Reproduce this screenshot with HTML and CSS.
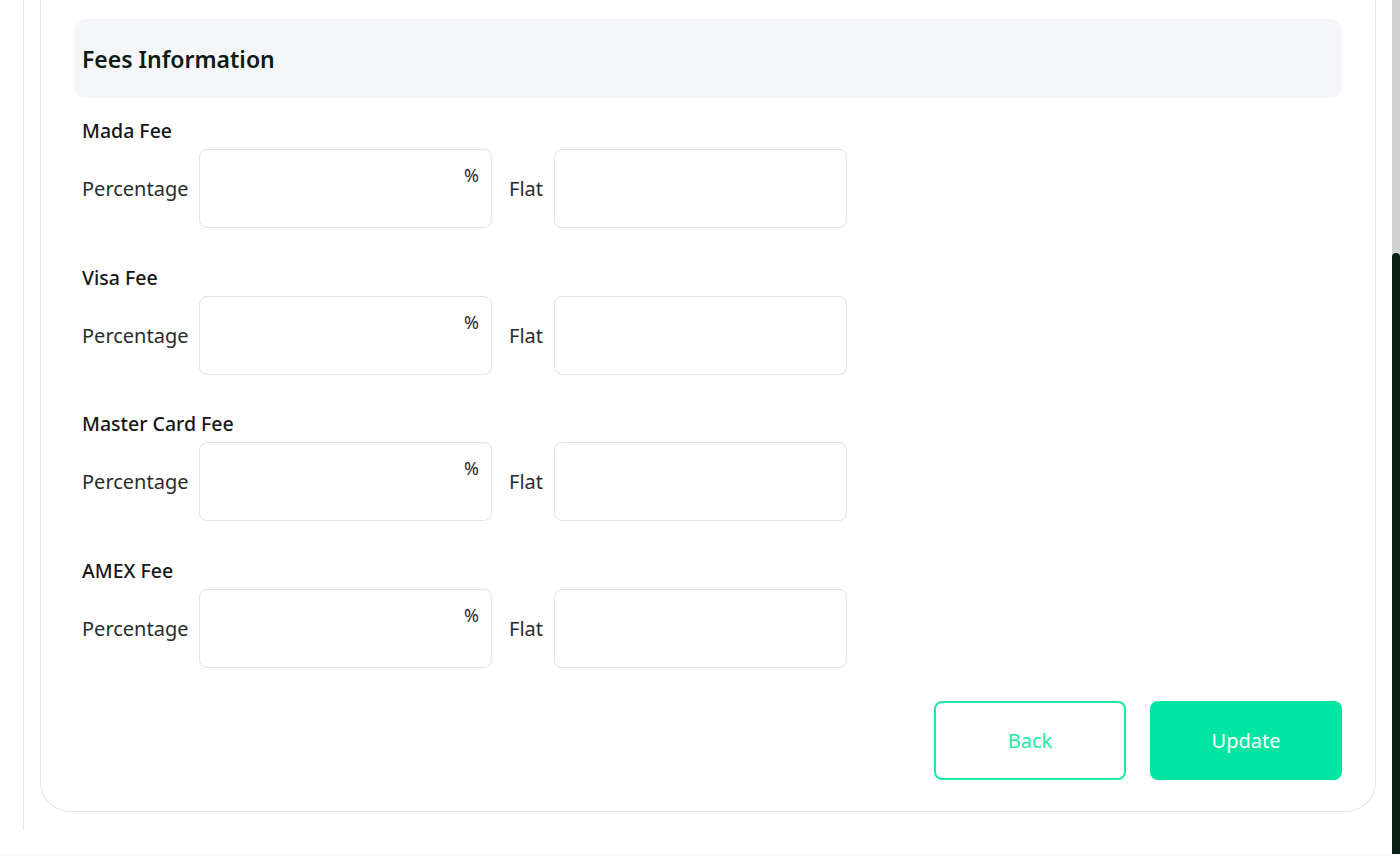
FILE: index.html
```html
<!DOCTYPE html>
<html lang="en">
<head>
<meta charset="utf-8">
<title>Fees Information</title>
<link rel="stylesheet" href="styles.css">
</head>
<body>
<div class="page">
  <div class="rail"></div>
  <main class="main">
    <section class="card">
      <div class="card-head">
        <h2 class="title">Fees Information</h2>
      </div>

      <div class="fee">
        <div class="fee-name">Mada Fee</div>
        <div class="fee-row">
          <label class="lbl lbl-pct">Percentage</label>
          <div class="field"><input class="inp" type="text"><span class="unit">%</span></div>
          <label class="lbl lbl-flat">Flat</label>
          <div class="field"><input class="inp" type="text"></div>
        </div>
      </div>

      <div class="fee">
        <div class="fee-name">Visa Fee</div>
        <div class="fee-row">
          <label class="lbl lbl-pct">Percentage</label>
          <div class="field"><input class="inp" type="text"><span class="unit">%</span></div>
          <label class="lbl lbl-flat">Flat</label>
          <div class="field"><input class="inp" type="text"></div>
        </div>
      </div>

      <div class="fee">
        <div class="fee-name">Master Card Fee</div>
        <div class="fee-row">
          <label class="lbl lbl-pct">Percentage</label>
          <div class="field"><input class="inp" type="text"><span class="unit">%</span></div>
          <label class="lbl lbl-flat">Flat</label>
          <div class="field"><input class="inp" type="text"></div>
        </div>
      </div>

      <div class="fee">
        <div class="fee-name">AMEX Fee</div>
        <div class="fee-row">
          <label class="lbl lbl-pct">Percentage</label>
          <div class="field"><input class="inp" type="text"><span class="unit">%</span></div>
          <label class="lbl lbl-flat">Flat</label>
          <div class="field"><input class="inp" type="text"></div>
        </div>
      </div>

      <div class="actions">
        <button class="btn btn-back" type="button">Back</button>
        <button class="btn btn-update" type="button">Update</button>
      </div>
    </section>
  </main>
  <div class="scrollbar"><div class="thumb"></div></div>
</div>
</body>
</html>
```

FILE: styles.css
```css
* { box-sizing: border-box; }

html, body {
  margin: 0;
  padding: 0;
  background: #fafafa;
}

body {
  font-family: "Noto Sans", "Open Sans", sans-serif;
  color: #1b1b1b;
}

.page {
  display: flex;
  height: 854px;
  background: #ffffff;
  overflow: hidden;
}

.rail {
  width: 24px;
  height: 830px;
  flex-shrink: 0;
  border-right: 1px solid #e6e6e6;
}

.main {
  flex: 1;
  padding: 0 16px 0 16px;
}

.card {
  border: 1px solid #e4e4e4;
  border-top: none;
  border-radius: 0 0 30px 30px;
  padding: 19px 33px 31px 33px;
  background: #fff;
}

.card-head {
  height: 79px;
  background: #f5f6fa;
  border-radius: 12px;
  display: flex;
  align-items: center;
  padding-left: 8px;
}

.title {
  margin: 0;
  font-size: 23px;
  font-weight: 600;
  color: #0c1a13;
}

.fee {
  padding-left: 8px;
  margin-top: 21px;
}

.fee + .fee {
  margin-top: 37.7px;
}

.fee-name {
  font-size: 19.5px;
  font-weight: 500;
  line-height: 24px;
  color: #161616;
  margin-bottom: 6px;
}

.fee-row {
  display: flex;
  align-items: center;
}

.lbl {
  font-size: 20px;
  color: #2b2b2b;
  white-space: nowrap;
}

.lbl-pct {
  width: 109px;
  margin-right: 8px;
}

.lbl-flat {
  width: 36px;
  margin-left: 17px;
  margin-right: 9px;
}

.field {
  position: relative;
  width: 293px;
  height: 79px;
}

.inp {
  display: block;
  width: 100%;
  height: 100%;
  border: 1px solid #e2e2e2;
  border-radius: 8px;
  background: #fff;
  outline: none;
  font: inherit;
  padding: 0 14px;
}

.unit {
  position: absolute;
  right: 13px;
  top: 14px;
  font-size: 18px;
  color: #2b2b2b;
}

.actions {
  display: flex;
  justify-content: flex-end;
  gap: 24px;
  margin-top: 33px;
}

.btn {
  width: 192px;
  height: 79px;
  border-radius: 8px;
  font-family: inherit;
  font-size: 20px;
  cursor: pointer;
}

.btn-back {
  background: #fff;
  border: 2px solid #1de9a6;
  color: #1de9a6;
}

.btn-update {
  background: #00e6a2;
  border: none;
  color: #ffffff;
}

.scrollbar {
  width: 8px;
  flex-shrink: 0;
  background: #d0d0d0;
  display: flex;
  flex-direction: column;
}

.thumb {
  margin-top: 253px;
  flex: 1;
  background: #0b2117;
  border-radius: 4px 4px 0 0;
}
```
